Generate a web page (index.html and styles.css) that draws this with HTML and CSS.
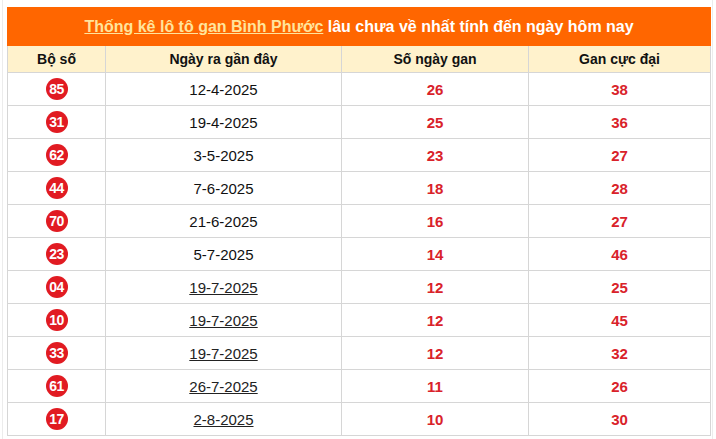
FILE: index.html
```html
<!DOCTYPE html>
<html lang="vi">
<head>
<meta charset="utf-8">
<link rel="stylesheet" href="styles.css">
</head>
<body>
<div class="wrap">
<table class="gan">
  <colgroup><col class="c1"><col class="c2"><col class="c3"><col class="c4"></colgroup>
  <thead>
    <tr><th class="title" colspan="4"><a class="title-link" href="#">Thống kê lô tô gan Bình Phước</a> lâu chưa về nhất tính đến ngày hôm nay</th></tr>
    <tr class="head"><th>Bộ số</th><th>Ngày ra gần đây</th><th>Số ngày gan</th><th>Gan cực đại</th></tr>
  </thead>
  <tbody>
    <tr><td><span class="ball">85</span></td><td>12-4-2025</td><td class="num">26</td><td class="num">38</td></tr>
    <tr><td><span class="ball">31</span></td><td>19-4-2025</td><td class="num">25</td><td class="num">36</td></tr>
    <tr><td><span class="ball">62</span></td><td>3-5-2025</td><td class="num">23</td><td class="num">27</td></tr>
    <tr><td><span class="ball">44</span></td><td>7-6-2025</td><td class="num">18</td><td class="num">28</td></tr>
    <tr><td><span class="ball">70</span></td><td>21-6-2025</td><td class="num">16</td><td class="num">27</td></tr>
    <tr><td><span class="ball">23</span></td><td>5-7-2025</td><td class="num">14</td><td class="num">46</td></tr>
    <tr><td><span class="ball">04</span></td><td><a class="date-link" href="#">19-7-2025</a></td><td class="num">12</td><td class="num">25</td></tr>
    <tr><td><span class="ball">10</span></td><td><a class="date-link" href="#">19-7-2025</a></td><td class="num">12</td><td class="num">45</td></tr>
    <tr><td><span class="ball">33</span></td><td><a class="date-link" href="#">19-7-2025</a></td><td class="num">12</td><td class="num">32</td></tr>
    <tr><td><span class="ball">61</span></td><td><a class="date-link" href="#">26-7-2025</a></td><td class="num">11</td><td class="num">26</td></tr>
    <tr><td><span class="ball">17</span></td><td><a class="date-link" href="#">2-8-2025</a></td><td class="num">10</td><td class="num">30</td></tr>
  </tbody>
</table>
</div>
</body>
</html>
```
FILE: styles.css
```css
html, body {
  margin: 0;
  padding: 0;
  background: #fff;
}
body {
  font-family: "Liberation Sans", Arial, sans-serif;
  color: #111;
}
.wrap {
  margin-left: 2px;
  width: 711px;
  border-left: 1px solid #ececec;
  border-right: 1px solid #ececec;
  padding: 7px 0 0 4px;
  box-sizing: border-box;
  height: 439px;
}
.gan {
  width: 703px;
  border-collapse: collapse;
  table-layout: fixed;
}
.gan th, .gan td {
  border: 1px solid #d6d6d6;
  text-align: center;
  padding: 0;
}
.c1 { width: 98px; }
.c2 { width: 236px; }
.c3 { width: 187px; }
.c4 { width: 182px; }
.title {
  background: #ff6600;
  border-color: #ff6600 !important;
  color: #fff;
  font-size: 16px;
  font-weight: bold;
  height: 37px;
}
.title-link {
  color: #ffe49c;
  text-decoration: underline;
}
.head th {
  background: #fff2cc;
  font-size: 14px;
  font-weight: bold;
  color: #111;
  height: 26px;
}
.gan td {
  height: 32px;
  font-size: 15px;
  color: #111;
}
.date-link {
  color: #222;
  text-decoration: underline;
}
.gan td.num {
  color: #d9222a;
  font-weight: bold;
  font-size: 15px;
}
.ball {
  display: inline-flex;
  align-items: center;
  justify-content: center;
  width: 22px;
  height: 22px;
  border-radius: 50%;
  background: #e11b22;
  color: #fff;
  font-weight: bold;
  font-size: 14px;
  letter-spacing: -0.6px;
  vertical-align: middle;
}
```
